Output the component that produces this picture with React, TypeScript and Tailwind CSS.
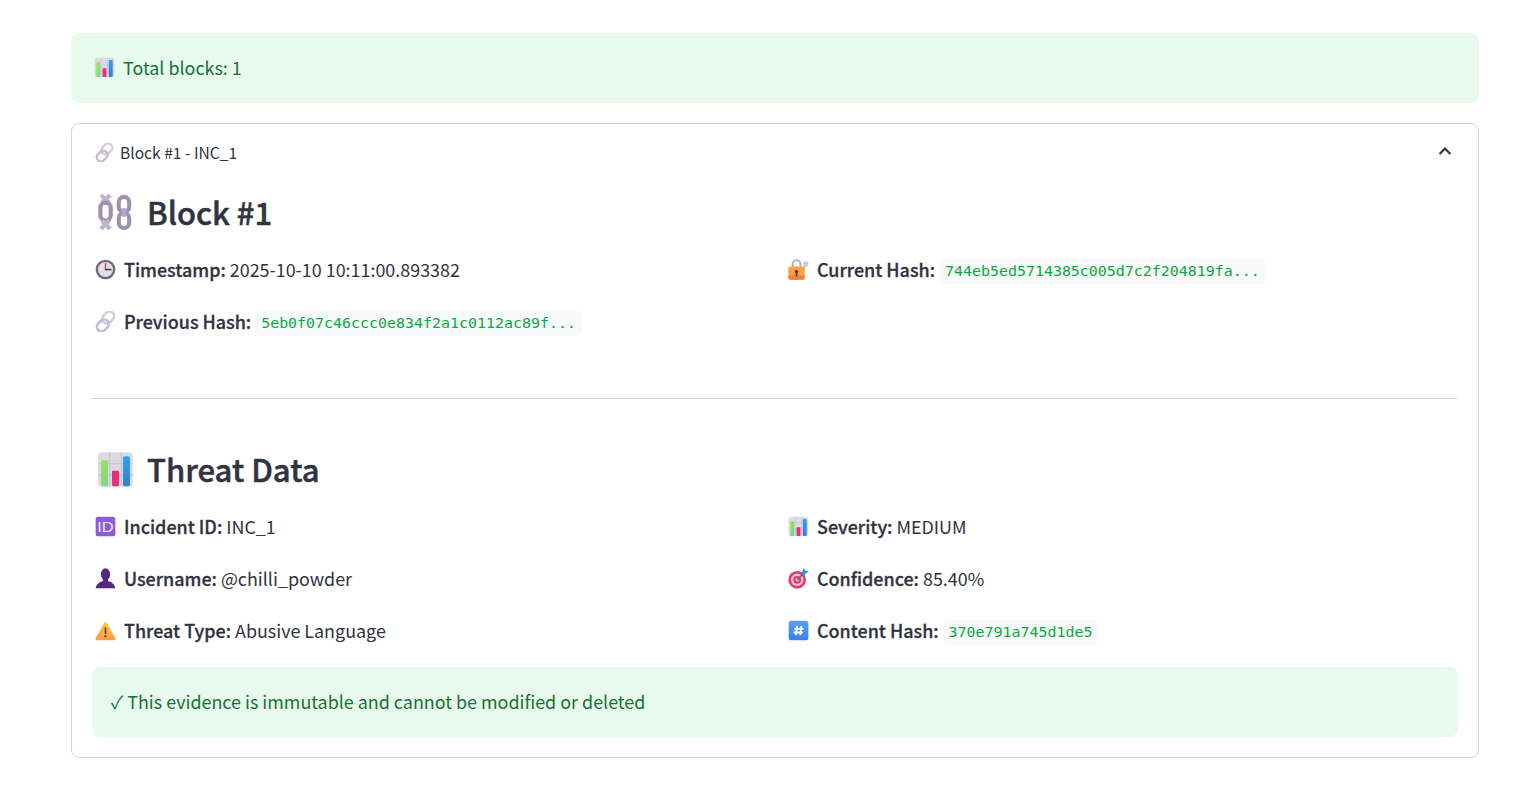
import React from 'react';

const sans = 'font-["Noto_Sans_CJK_SC","Noto_Sans",sans-serif]';

const BarChartIcon: React.FC<{ className?: string }> = ({ className }) => (
    <svg viewBox="0 0 32 32" className={className}>
        <defs>
            <linearGradient id="barGreen" x1="0" y1="0" x2="1" y2="1">
                <stop offset="0" stopColor="#a4e34f" />
                <stop offset="1" stopColor="#6fd98f" />
            </linearGradient>
            <linearGradient id="barBlue" x1="0" y1="0" x2="0" y2="1">
                <stop offset="0" stopColor="#29a3ec" />
                <stop offset="1" stopColor="#2f80dc" />
            </linearGradient>
        </defs>
        <rect x="1" y="1" width="30" height="30" rx="3.5" fill="#ddd9e3" />
        <path d="M11 1v30M21 1v30M1 11h30M1 21h30" stroke="#c4bfcc" strokeWidth="0.8" />
        <rect x="3.5" y="8" width="6" height="22.5" rx="1.5" fill="url(#barGreen)" />
        <rect x="13" y="17" width="6" height="13.5" rx="1" fill="#e8307a" />
        <rect x="22.5" y="4.5" width="6" height="26" rx="1.5" fill="url(#barBlue)" />
    </svg>
);

const LinkIcon: React.FC<{ className?: string }> = ({ className }) => (
    <svg viewBox="0 0 32 32" className={className} fill="none">
        <rect x="13" y="0" width="14" height="20" rx="7" transform="rotate(45 20 10)" stroke="#d3cbdf" strokeWidth="4" />
        <rect x="5" y="12" width="14" height="20" rx="7" transform="rotate(45 12 22)" stroke="#c5bbd5" strokeWidth="4" />
    </svg>
);

const ChainsIcon: React.FC<{ className?: string }> = ({ className }) => (
    <svg viewBox="0 0 36 38" className={className} fill="none">
        <g stroke="#9d92b0" strokeWidth="4.400">
            <path d="M3 1l9 8M13 1L4 9" stroke="#bdb4ca" />
            <rect x="2.500" y="9" width="11" height="19" rx="5.500" />
            <path d="M3 37l9-9M13 37l-9-9" stroke="#bdb4ca" />
            <rect x="22" y="3" width="11" height="16" rx="5.500" />
            <rect x="22" y="20" width="11" height="16" rx="5.500" />
            <path d="M27.500 15v9" strokeWidth="5" stroke="#b3a9c2" />
        </g>
    </svg>
);

const ClockIcon: React.FC<{ className?: string }> = ({ className }) => (
    <svg viewBox="0 0 32 32" className={className}>
        <circle cx="16" cy="16" r="15" fill="#6d6a72" />
        <circle cx="16" cy="16" r="11.5" fill="#e2dee7" />
        <rect x="15" y="6" width="2" height="10" fill="#d9385c" />
        <rect x="15" y="15" width="10" height="2.2" fill="#3a3744" />
    </svg>
);

const LockKeyIcon: React.FC<{ className?: string }> = ({ className }) => (
    <svg viewBox="0 0 32 32" className={className}>
        <path d="M7 14V8a6 6 0 0 1 12 0v6" fill="none" stroke="#b4adbd" strokeWidth="3" />
        <path d="M22 17l5-8" stroke="#cfcad6" strokeWidth="3.400" />
        <circle cx="27" cy="7.500" r="4.200" fill="#cfcad6" />
        <rect x="0.500" y="11.500" width="25" height="20" rx="3" fill="#f9a23c" />
        <path d="M0.500 25h25v3.500a3 3 0 0 1-3 3h-19a3 3 0 0 1-3-3z" fill="#f4803b" />
        <circle cx="13" cy="19" r="2.600" fill="#4a3a48" />
        <rect x="11.700" y="19" width="2.600" height="7.500" fill="#4a3a48" />
    </svg>
);

const IdIcon: React.FC<{ className?: string }> = ({ className }) => (
    <svg viewBox="0 0 32 32" className={className}>
        <rect x="1" y="1" width="30" height="30" rx="4" fill="#8b5cd6" />
        <text x="16" y="24" textAnchor="middle" fontFamily="Liberation Sans, sans-serif" fontSize="23" textLength="25" lengthAdjust="spacingAndGlyphs" fill="#efe8fb">ID</text>
    </svg>
);

const BustIcon: React.FC<{ className?: string }> = ({ className }) => (
    <svg viewBox="0 0 32 32" className={className}>
        <ellipse cx="16" cy="9.500" rx="7" ry="9" fill="#55287f" />
        <path d="M12 16h8v4c5 1 10 4 11 11H1c1-7 6-10 11-11z" fill="#55287f" />
    </svg>
);

const WarningIcon: React.FC<{ className?: string }> = ({ className }) => (
    <svg viewBox="0 0 32 32" className={className}>
        <defs>
            <linearGradient id="warnFill" x1="0" y1="0" x2="0" y2="1">
                <stop offset="0" stopColor="#ffc83d" />
                <stop offset="1" stopColor="#fb9a4a" />
            </linearGradient>
        </defs>
        <path d="M14 4.500c1-1.800 3-1.800 4 0l13 23c1 1.800 0 3.500-2 3.500H3c-2 0-3-1.700-2-3.500z" fill="url(#warnFill)" />
        <rect x="14.800" y="11" width="2.400" height="10.500" rx="1.200" fill="#4a3a48" />
        <circle cx="16" cy="25" r="1.700" fill="#4a3a48" />
    </svg>
);

const TargetIcon: React.FC<{ className?: string }> = ({ className }) => (
    <svg viewBox="0 0 32 32" className={className}>
        <circle cx="14" cy="18" r="13.500" fill="#e6366f" />
        <circle cx="14" cy="18" r="9.500" fill="#f4c6d4" />
        <circle cx="14" cy="18" r="6" fill="#e6366f" />
        <circle cx="14" cy="18" r="2.600" fill="#f4c6d4" />
        <path d="M14 18L25 7" stroke="#5c6f8e" strokeWidth="2.400" />
        <path d="M21 7l3-7 3 4 5 1-6 4-1 4z" fill="#2f9be8" />
    </svg>
);

const HashIcon: React.FC<{ className?: string }> = ({ className }) => (
    <svg viewBox="0 0 32 32" className={className}>
        <defs>
            <linearGradient id="hashFill" x1="0" y1="0" x2="0" y2="1">
                <stop offset="0" stopColor="#5a9ff5" />
                <stop offset="1" stopColor="#3a7ff0" />
            </linearGradient>
        </defs>
        <rect x="1" y="1" width="30" height="30" rx="4" fill="url(#hashFill)" />
        <path d="M14 9l-2 14M20.500 9l-2 14M9.500 13.500h14M8.500 19h14" stroke="#fff" strokeWidth="2.800" />
    </svg>
);

const Code: React.FC<{ children: React.ReactNode }> = ({ children }) => (
    <code className='mt-[4px] rounded-md bg-[#f8f9fb] px-[6px] py-[2px] font-["DejaVu_Sans_Mono",monospace] text-[14.95px] leading-[21px] text-[#09ab3b]'>
        {children}
    </code>
);

const Field: React.FC<{ icon: React.ReactNode; label: string; children: React.ReactNode }> = ({ icon, label, children }) => (
    <div className="flex h-[52px] items-center text-[17.92px] text-[#31333f]">
        <span className="ml-[3px] mr-[8px] flex w-[21px] flex-none">{icon}</span>
        <strong className="font-medium [-webkit-text-stroke:0.3px_#31333f]">{label}</strong>
        <span className="ml-[4px] flex items-center">{children}</span>
    </div>
);

export default function App() {
    return (
        <div className={`${sans} min-h-[789px] bg-white pl-[71px] pr-[51px] pt-[33px]`}>
            <div className="flex h-[70px] items-center rounded-lg bg-[#e8f9ee] px-[23px] pb-[1px] text-[17.92px] text-[#177233]">
                <BarChartIcon className="mr-[8px] h-[21px] w-[21px]" />
                Total blocks: 1
            </div>

            <div className="mt-[20px] h-[635px] rounded-lg border border-[#d5d6da] px-[20px]">
                <div className="flex h-[57px] items-center justify-between">
                    <div className="flex items-center pt-[1px] text-[15.6px] text-[#31333f]">
                        <LinkIcon className="ml-[3px] mr-[6px] h-[19px] w-[19px]" />
                        Block #1 - INC_1
                    </div>
                    <svg viewBox="0 0 24 24" className="mr-[3px] mb-[3px] h-[20px] w-[20px]" fill="none" stroke="#31333f" strokeWidth="2.600">
                        <path d="M5.500 15.500l6.500-6.500 6.500 6.500" />
                    </svg>
                </div>

                <h2 className="mt-[7px] flex h-[48px] items-center text-[31px] font-medium text-[#31333f] [-webkit-text-stroke:0.5px_#31333f]">
                    <ChainsIcon className="ml-[6px] mr-[15px] h-[38px] w-[34px]" />
                    Block #1
                </h2>

                <div className="mt-[7px] grid grid-cols-2 gap-x-[20px]">
                    <Field icon={<ClockIcon className="h-[21px] w-[21px]" />} label="Timestamp:">2025-10-10 10:11:00.893382</Field>
                    <Field icon={<LockKeyIcon className="h-[21px] w-[21px]" />} label="Current Hash:">
                        <Code>744eb5ed5714385c005d7c2f204819fa...</Code>
                    </Field>
                    <Field icon={<LinkIcon className="h-[21px] w-[21px]" />} label="Previous Hash:">
                        <Code>5eb0f07c46ccc0e834f2a1c0112ac89f...</Code>
                    </Field>
                </div>

                <hr className="mt-[51px] border-[#d5d6da]" />

                <h2 className="mt-[46px] flex h-[48px] items-center text-[31px] font-medium text-[#31333f] [-webkit-text-stroke:0.5px_#31333f]">
                    <BarChartIcon className="ml-[5px] mr-[13px] h-[37px] w-[37px]" />
                    Threat Data
                </h2>

                <div className="mt-[7px] grid grid-cols-2 gap-x-[20px]">
                    <Field icon={<IdIcon className="h-[21px] w-[21px]" />} label="Incident ID:">INC_1</Field>
                    <Field icon={<BarChartIcon className="h-[21px] w-[21px]" />} label="Severity:">MEDIUM</Field>
                    <Field icon={<BustIcon className="h-[21px] w-[21px]" />} label="Username:">@chilli_powder</Field>
                    <Field icon={<TargetIcon className="h-[21px] w-[21px]" />} label="Confidence:">85.40%</Field>
                    <Field icon={<WarningIcon className="h-[21px] w-[21px]" />} label="Threat Type:">Abusive Language</Field>
                    <Field icon={<HashIcon className="h-[21px] w-[21px]" />} label="Content Hash:">
                        <Code>370e791a745d1de5</Code>
                    </Field>
                </div>

                <div className="mt-[11px] flex h-[70px] items-center rounded-lg bg-[#e8f9ee] px-[19px] pb-[1px] text-[17.92px] text-[#177233]">
                    ✓ This evidence is immutable and cannot be modified or deleted
                </div>
            </div>
        </div>
    );
}
